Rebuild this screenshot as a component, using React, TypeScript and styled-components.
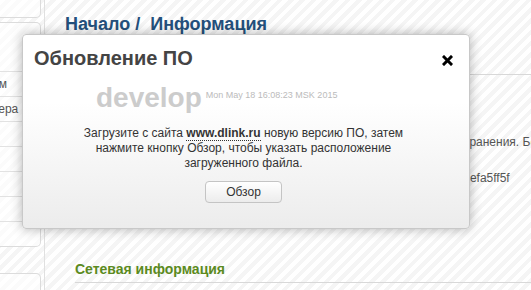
import React from 'react';
import styled, { createGlobalStyle } from 'styled-components';

const GlobalStyle = createGlobalStyle`
  html, body {
    margin: 0;
    padding: 0;
    overflow: hidden;
  }
  body {
    font-family: "Liberation Sans", Arial, sans-serif;
    color: #333;
  }
`;

const menuItems = [
  { label: 'Wi-Fi', tall: true },
  { label: 'Режим' },
  { label: 'Сервера' },
  { label: 'LAN' },
  { label: 'WAN' },
  { label: 'DNS' },
  { label: 'IPTV' },
  { label: 'USB' },
];

const infoRows = [
  { name: 'Модель:', value: 'DIR-300NRU' },
  { name: 'Версия ПО:', value: '2.5.11' },
  { name: 'Время сборки:', value: 'Mon May 18 16:08:23 MSK 2015' },
  { name: 'Описание:', value: 'Образ ПО, с функцией резервного сохранения. Без изменений настроек' },
  { name: 'Производитель:', value: 'D-Link Russia' },
  { name: 'Ревизия:', value: '4a6c0d9b21e7f3c58a0b9d2e49c7b1e48efa5ff5f' },
];

const App: React.FC = () => {
  return (
    <Page>
      <GlobalStyle />
      <Sidebar>
        <TopCard />
        <MenuCard>
          {menuItems.map(item => (
            <MenuItem key={item.label} tall={item.tall}>
              {item.label}
            </MenuItem>
          ))}
        </MenuCard>
        <BottomCard />
      </Sidebar>

      <Main>
        <Breadcrumbs>Начало /&nbsp; Информация</Breadcrumbs>

        <Section>
          <SectionTitle color="#24507c">Информация об устройстве</SectionTitle>
          <InfoTable>
            {infoRows.map(row => (
              <React.Fragment key={row.name}>
                <InfoName>{row.name}</InfoName>
                <InfoValue>{row.value}</InfoValue>
              </React.Fragment>
            ))}
          </InfoTable>
        </Section>

        <NetSection>
          <SectionTitle color="#5b8a21">Сетевая информация</SectionTitle>
        </NetSection>
      </Main>

      <Modal>
        <ModalHeader>
          <ModalTitle>Обновление ПО</ModalTitle>
          <CloseButton aria-label="Закрыть">
            <svg width="11" height="11" viewBox="0 0 11 11">
              <path d="M2 2 L9 9 M9 2 L2 9" stroke="#000" strokeWidth="3" strokeLinecap="square" />
            </svg>
          </CloseButton>
        </ModalHeader>

        <VersionRow>
          <VersionName>develop</VersionName>
          <BuildDate>Mon May 18 16:08:23 MSK 2015</BuildDate>
        </VersionRow>

        <Hint>
          Загрузите с сайта <SiteLink>www.dlink.ru</SiteLink> новую версию ПО, затем
          нажмите кнопку Обзор, чтобы указать расположение загруженного файла.
        </Hint>

        <ButtonRow>
          <BrowseButton>Обзор</BrowseButton>
        </ButtonRow>
      </Modal>
    </Page>
  );
};

const Page = styled.div`
  position: relative;
  display: flex;
  height: 290px;
  overflow: hidden;
  background: repeating-linear-gradient(
    135deg,
    #ffffff 0px,
    #ffffff 4px,
    #f5f5f5 4px,
    #f5f5f5 8px
  );
`;

const Sidebar = styled.div`
  flex: 0 0 220px;
  min-width: 0;
  margin-left: -179px;
  display: flex;
  flex-direction: column;
  gap: 4px;
`;

const Card = styled.div`
  flex-shrink: 0;
  border: 1px solid #dcdcdc;
  border-left: none;
  border-radius: 0 5px 5px 0;
  background: rgba(255, 255, 255, 0.55);
`;

const TopCard = styled(Card)`
  margin-top: -10px;
  height: 26px;
`;

const MenuCard = styled(Card)`
  display: flex;
  flex-direction: column;
`;

const BottomCard = styled(Card)`
  margin-top: 22px;
  height: 60px;
`;

const MenuItem = styled.div<{ tall?: boolean }>`
  padding: ${p => (p.tall ? '9px 10px 9px 149px' : '5px 10px 4px 149px')};
  height: ${p => (p.tall ? '30px' : '15px')};
  font-size: 12px;
  line-height: 15px;
  color: #555;
  white-space: nowrap;
  border-bottom: 1px solid #e2e2e2;
  &:last-child {
    border-bottom: none;
  }
`;

const Main = styled.div`
  flex: 1;
  min-width: 0;
  margin-left: 3px;
  border-left: 1px solid #e0e0e0;
  padding: 13px 0 0 20px;
`;

const Breadcrumbs = styled.h1`
  margin: 0;
  font-size: 18px;
  line-height: 22px;
  font-weight: bold;
  color: #24507c;
`;

const Section = styled.section`
  margin: 17px 0 0 10px;
`;

const NetSection = styled.section`
  margin: 73px 0 0 10px;
`;

const SectionTitle = styled.h2<{ color: string }>`
  margin: 0;
  padding-bottom: 4px;
  font-size: 14px;
  line-height: 18px;
  font-weight: bold;
  color: ${p => p.color};
  border-bottom: 1px solid #d8d8d8;
`;

const InfoTable = styled.div`
  display: grid;
  grid-template-columns: 180px 1fr;
  padding-top: 4px;
  font-size: 12px;
  line-height: 18px;
`;

const InfoName = styled.div`
  color: #555;
`;

const InfoValue = styled.div`
  color: #555;
  white-space: nowrap;
`;

const Modal = styled.div`
  position: absolute;
  left: 22px;
  top: 34px;
  width: 448px;
  height: 195px;
  box-sizing: border-box;
  border: 1px solid #c8c8c8;
  border-radius: 4px;
  background: linear-gradient(#ffffff 35%, #ececec 100%);
  box-shadow: 0 0 12px rgba(0, 0, 0, 0.3);
  padding: 11px 16px 0 11px;
`;

const ModalHeader = styled.div`
  display: flex;
  align-items: center;
  justify-content: space-between;
  height: 24px;
`;

const ModalTitle = styled.div`
  font-size: 20px;
  line-height: 24px;
  font-weight: bold;
  color: #444;
`;

const CloseButton = styled.span`
  display: flex;
  margin-top: 4px;
  cursor: pointer;
`;

const VersionRow = styled.div`
  display: flex;
  align-items: flex-start;
  gap: 4px;
  margin-top: 12px;
  padding-left: 62px;
`;

const VersionName = styled.div`
  font-size: 28px;
  line-height: 32px;
  font-weight: bold;
  color: #cccccc;
`;

const BuildDate = styled.div`
  margin-top: 8px;
  font-size: 9px;
  line-height: 11px;
  color: #bbbbbb;
`;

const Hint = styled.p`
  margin: 12px auto 0;
  width: 330px;
  font-size: 12px;
  line-height: 15px;
  text-align: center;
  color: #333;
`;

const SiteLink = styled.span`
  font-weight: bold;
  border-bottom: 1px dotted #333;
`;

const ButtonRow = styled.div`
  display: flex;
  justify-content: center;
  margin-top: 10px;
`;

const BrowseButton = styled.button`
  width: 77px;
  height: 22px;
  border: 1px solid #c4c4c4;
  border-radius: 4px;
  background: linear-gradient(#ffffff, #ececec);
  font-family: "Liberation Sans", Arial, sans-serif;
  font-size: 12px;
  color: #333;
  cursor: pointer;
  padding: 0;
`;

export default App;
